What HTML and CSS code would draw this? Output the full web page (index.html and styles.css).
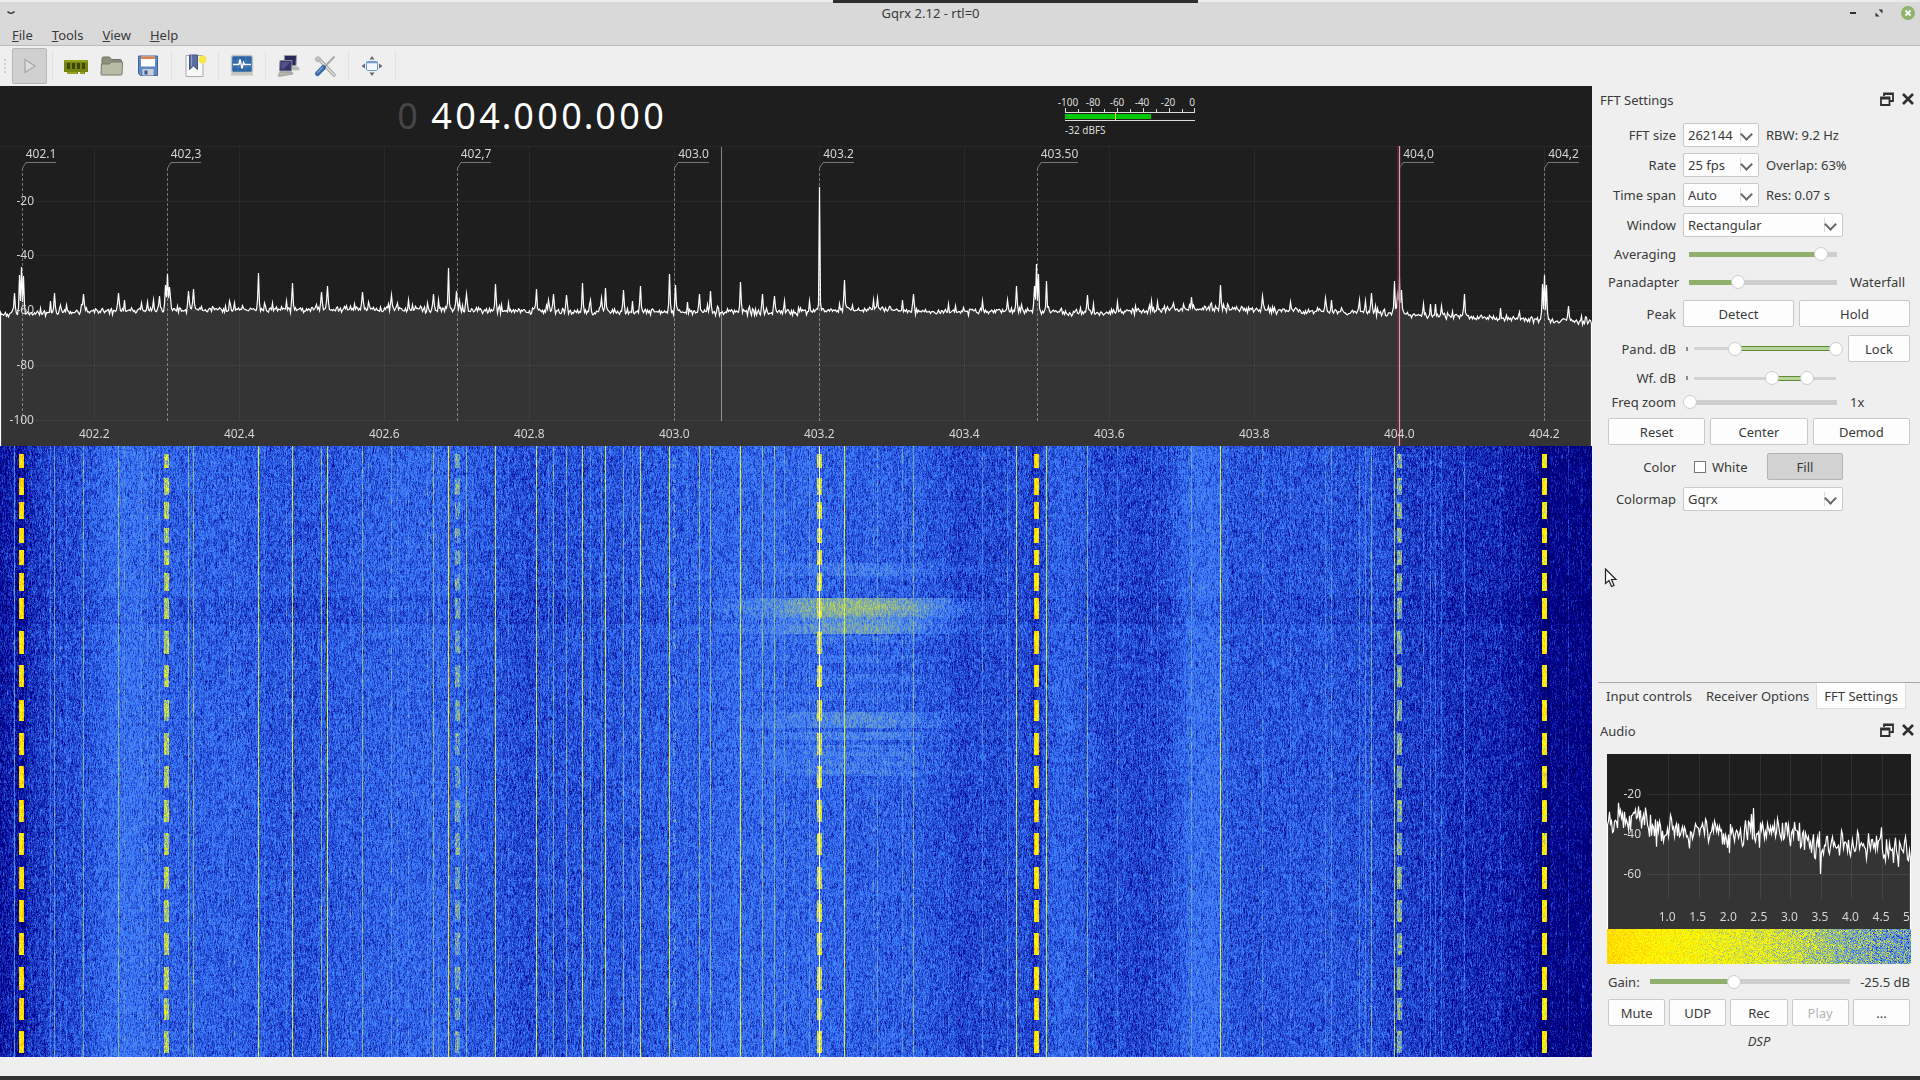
FILE: index.html
```html
<!DOCTYPE html>
<html lang="en">
<head>
  <meta charset="UTF-8">
  <meta name="viewport" content="width=device-width, initial-scale=1.0">
  <title>Gqrx 2.12 - rtl=0</title>
  <link rel="stylesheet" href="styles.css">
</head>
<body>
  <header class="titlebar">
    <div class="top-notch"></div>
    <button class="win-btn menu-btn" aria-label="Window menu">
      <svg width="10" height="6" viewBox="0 0 10 6"><path d="M1.5 1.5Q5 5 8.5 1.5" fill="none" stroke="#333" stroke-width="1.6"/></svg>
    </button>
    <h1>Gqrx 2.12 - rtl=0</h1>
    <div class="win-buttons">
      <button class="win-btn" aria-label="Minimize"><svg width="8" height="8" viewBox="0 0 8 8"><path d="M1 4h6" stroke="#333" stroke-width="2"/></svg></button>
      <button class="win-btn" aria-label="Restore"><svg width="8" height="8" viewBox="0 0 8 8"><path d="M3.5 .5h4v4zM.5 3.5v4h4z" fill="#333"/></svg></button>
      <button class="win-btn" aria-label="Close"><svg width="14" height="14" viewBox="0 0 14 14"><circle cx="7" cy="7" r="7" fill="#8db36c"/><path d="M4.5 4.5l5 5M9.5 4.5l-5 5" stroke="#fff" stroke-width="1.8"/></svg></button>
    </div>
  </header>

  <nav class="menubar">
    <a href="#"><u>F</u>ile</a>
    <a href="#"><u>T</u>ools</a>
    <a href="#"><u>V</u>iew</a>
    <a href="#"><u>H</u>elp</a>
  </nav>

  <div class="toolbar">
    <span class="grip"></span>
    <button class="tool pressed" aria-label="Start DSP">
      <svg width="24" height="24" viewBox="0 0 24 24"><path d="M7 5.5L17 12 7 18.5z" fill="#dedede" stroke="#a5a5a5" stroke-width="1.2"/></svg>
    </button>
    <span class="sep"></span>
    <button class="tool" aria-label="Configure I/O devices">
      <svg width="24" height="24" viewBox="0 0 24 24">
        <path d="M0 6h24v12h-3v2h-5v-2h-2v2H3v-2H0z" fill="#77840f"/>
        <path d="M0 6h24v2H0z" fill="#93a01d"/>
        <path d="M3 9h3v6H3zM8 9h3v6H8zM13 9h3v6h-3zM18 9h3v6h-3z" fill="#3d4708"/>
        <path d="M4 18v2M6 18v2M8 18v2M10 18v2M12 18v2M17 18v2M19 18v2" stroke="#c5bb3a"/>
      </svg>
    </button>
    <button class="tool" aria-label="Load settings">
      <svg width="24" height="24" viewBox="0 0 24 24">
        <path d="M2 4.5q0-1.500 1.500-1.500h6l2 2.500H20q1.500 0 1.500 1.500v12H2z" fill="#8f917d" stroke="#6f7160"/>
        <path d="M1 20l.5-10h8l1.500-2h11.500l-.5 12q0 1-1 1H2q-1 0-1-1z" fill="#babda5" stroke="#77796a"/>
      </svg>
    </button>
    <button class="tool" aria-label="Save settings">
      <svg width="24" height="24" viewBox="0 0 24 24">
        <path d="M2.5 2h19v19.500h-17l-2-2z" fill="#5f8ac5" stroke="#3e639c"/>
        <path d="M5 2.500h14v10H5z" fill="#fff"/>
        <path d="M5 2.500h14v2.500H5z" fill="#e38048"/>
        <path d="M6.500 15h11v6.500h-11z" fill="#c9ced6"/>
        <path d="M8.500 16.500h3v4h-3z" fill="#34568c"/>
      </svg>
    </button>
    <span class="sep"></span>
    <button class="tool" aria-label="Bookmarks">
      <svg width="24" height="24" viewBox="0 0 24 24">
        <path d="M3 1.500h17v21H3z" fill="#f8f8f8" stroke="#a9a9a9"/>
        <path d="M6.500 1h8v14.500l-4-3.500-4 3.500z" fill="#5b6ea1" stroke="#45557f"/>
        <path d="M8.500 1v11" stroke="#8e9dc4"/>
        <circle cx="19.500" cy="5.500" r="4" fill="#f6e74a"/>
      </svg>
    </button>
    <span class="sep"></span>
    <button class="tool" aria-label="I/Q recorder">
      <svg width="24" height="24" viewBox="0 0 24 24">
        <path d="M2 18h20l1.500 3.500H.5z" fill="#c5c9bd"/>
        <rect x="1.500" y="1.500" width="21" height="17" rx="2" fill="#2c64a4" stroke="#bfc5c5" stroke-width="1.500"/>
        <path d="M3 7h18M3 13h18M8 3v14M16 3v14" stroke="#4c83bf" stroke-width=".8"/>
        <path d="M3 10.500h6l1-5 2 9 1.500-6 1 2H21" fill="none" stroke="#fff" stroke-width="1.400"/>
      </svg>
    </button>
    <span class="sep"></span>
    <button class="tool" aria-label="Remote control">
      <svg width="24" height="24" viewBox="0 0 24 24">
        <path d="M7.500 1.500h12l-.5 10h-12z" fill="#29285a" stroke="#9a9ca0"/>
        <path d="M13 12l8 .5 2 3.500-7 .5z" fill="#b9bbb5"/>
        <path d="M3 6.500h12l-.5 10.500H2.500z" fill="#34336b" stroke="#8d8f93"/>
        <path d="M4.500 8h9l-7 7h-2z" fill="#53528c"/>
        <path d="M3 18h12l1 2-14 2.500-1-1z" fill="#b5b8ad" stroke="#85877f" stroke-width=".6"/>
      </svg>
    </button>
    <button class="tool" aria-label="Remote control settings">
      <svg width="24" height="24" viewBox="0 0 24 24">
        <path d="M5 4l16 17" stroke="#9fa29c" stroke-width="3.400" stroke-linecap="round"/>
        <path d="M5 4l16 17" stroke="#dfe1dc" stroke-width="1.600" stroke-linecap="round"/>
        <path d="M2 3q-1 5 4 5.500Q9 7 7.500 3.500L5 5z" fill="#b8bbb5"/>
        <path d="M21.500 2.500L12 12.500" stroke="#a7aaa5" stroke-width="2"/>
        <path d="M10.500 13.500L4.500 19.500" stroke="#3669a8" stroke-width="5" stroke-linecap="round"/>
        <path d="M9.500 13.500l-5 5" stroke="#7fa7d6" stroke-width="1.400" stroke-linecap="round"/>
      </svg>
    </button>
    <span class="sep"></span>
    <button class="tool" aria-label="Full screen">
      <svg width="24" height="24" viewBox="0 0 24 24">
        <rect x="6.500" y="7.500" width="11" height="9" rx="1" fill="#f3f6fa" stroke="#6f9bcd"/>
        <path d="M6.500 8.500h11" stroke="#6f9bcd" stroke-width="1.500"/>
        <path d="M12 2l2.500 3.500h-5zM12 22l2.500-3.500h-5zM1.500 12L5 9.500v5zM22.500 12L19 9.500v5z" fill="#5e6a78"/>
      </svg>
    </button>
    <span class="sep"></span>
  </div>

  <div class="workspace">
    <main class="receiver">
      <div class="readout">
        <div class="frequency">
          <span class="digit off">0</span><span class="dot"></span>
          <span class="digit">4</span><span class="digit">0</span><span class="digit">4</span><span class="dot">.</span>
          <span class="digit">0</span><span class="digit">0</span><span class="digit">0</span><span class="dot">.</span>
          <span class="digit">0</span><span class="digit">0</span><span class="digit">0</span>
        </div>
        <svg class="meter" width="144" height="60" viewBox="0 0 144 60">
          <g text-anchor="middle">
            <text x="7" y="20">-100</text>
            <text x="32" y="20">-80</text>
            <text x="56" y="20">-60</text>
            <text x="81" y="20">-40</text>
            <text x="107" y="20">-20</text>
            <text x="131" y="20">0</text>
          </g>
          <path d="M4.500 26v-4M17.500 26v-3M30.500 26v-4M43.500 26v-3M56.500 26v-4M69.500 26v-3M82.500 26v-4M95.500 26v-3M108.500 26v-4M121.500 26v-3M133.500 26v-4M4 26.500h130M4 34.500h130" stroke="#ddd"/>
          <path d="M4 28h86v5H4z" fill="#00c800"/>
          <path d="M54.500 27v7" stroke="#ee0"/>
          <text x="4" y="48">-32 dBFS</text>
        </svg>
      </div>
      <div class="panadapter" id="panadapter">
        <canvas id="spectrum"></canvas>
      </div>
      <div class="waterfall">
        <canvas id="waterfall"></canvas>
      </div>
    </main>

    <aside class="docks">
      <section class="dock fft-dock">
        <div class="dock-title">
          <h2>FFT Settings</h2>
          <button aria-label="Float"><svg width="14" height="14" viewBox="0 0 14 14"><path d="M4 4V1.500h9V9h-3M4 2h9M1 5.500h8.500V13H1zM1 6.500h8.500" fill="none" stroke="#2f2f2f" stroke-width="1.800"/></svg></button>
          <button aria-label="Close"><svg width="14" height="14" viewBox="0 0 14 14"><path d="M2 2l10 10M12 2L2 12" stroke="#2f2f2f" stroke-width="2.600"/></svg></button>
        </div>
        <form class="fft-form">
          <div class="row">
            <label for="fftSize">FFT size</label>
            <span class="combo small"><select id="fftSize"><option>262144</option></select></span>
            <span>RBW: 9.2 Hz</span>
          </div>
          <div class="row">
            <label for="rate">Rate</label>
            <span class="combo small"><select id="rate"><option>25 fps</option></select></span>
            <span>Overlap: 63%</span>
          </div>
          <div class="row">
            <label for="timeSpan">Time span</label>
            <span class="combo small"><select id="timeSpan"><option>Auto</option></select></span>
            <span>Res: 0.07 s</span>
          </div>
          <div class="row">
            <label for="window">Window</label>
            <span class="combo"><select id="window"><option>Rectangular</option></select></span>
          </div>
          <div class="row slider-row">
            <label for="averaging">Averaging</label>
            <input class="slider" type="range" id="averaging" value="90" style="--fill: 90%">
          </div>
          <div class="row slider-row">
            <label for="split">Panadapter</label>
            <input class="slider" type="range" id="split" value="33" style="--fill: 33%">
            <span>Waterfall</span>
          </div>
          <div class="row button-row">
            <span class="label">Peak</span>
            <button type="button">Detect</button>
            <button type="button">Hold</button>
          </div>
          <div class="row button-row">
            <label for="pandMin">Pand. dB</label>
            <span class="dual" style="--from: 30%; --to: 100%">
              <input type="range" id="pandMin" value="31">
              <input type="range" aria-label="Pand. dB max" value="100">
            </span>
            <button type="button">Lock</button>
          </div>
          <div class="row compact">
            <label for="wfMin">Wf. dB</label>
            <span class="dual" style="--from: 56%; --to: 79%">
              <input type="range" id="wfMin" value="56">
              <input type="range" aria-label="Wf. dB max" value="80">
            </span>
          </div>
          <div class="row compact">
            <label for="zoom">Freq zoom</label>
            <input class="slider" type="range" id="zoom" value="0" style="--fill: 0%">
            <span>1x</span>
          </div>
          <div class="row button-row even">
            <button type="button">Reset</button>
            <button type="button">Center</button>
            <button type="button">Demod</button>
          </div>
          <div class="row button-row">
            <span class="label">Color</span>
            <label class="check"><input type="checkbox">White</label>
            <button type="button" class="down">Fill</button>
          </div>
          <div class="row">
            <label for="colormap">Colormap</label>
            <span class="combo"><select id="colormap"><option>Gqrx</option></select></span>
          </div>
        </form>
      </section>

      <nav class="tabs">
        <button>Input controls</button>
        <button>Receiver Options</button>
        <button class="active">FFT Settings</button>
      </nav>

      <section class="dock audio-dock">
        <div class="dock-title">
          <h2>Audio</h2>
          <button aria-label="Float"><svg width="14" height="14" viewBox="0 0 14 14"><path d="M4 4V1.500h9V9h-3M4 2h9M1 5.500h8.500V13H1zM1 6.500h8.500" fill="none" stroke="#2f2f2f" stroke-width="1.800"/></svg></button>
          <button aria-label="Close"><svg width="14" height="14" viewBox="0 0 14 14"><path d="M2 2l10 10M12 2L2 12" stroke="#2f2f2f" stroke-width="2.600"/></svg></button>
        </div>
        <div class="audio-plot" id="audioPlot"><canvas id="audioSpectrum"></canvas></div>
        <div class="audio-fall"><canvas id="audioFall"></canvas></div>
        <div class="gain">
          <label for="gain">Gain:</label>
          <input class="slider" type="range" id="gain" value="42" style="--fill: 42%">
          <output for="gain">-25.5 dB</output>
        </div>
        <div class="audio-buttons">
          <button>Mute</button>
          <button>UDP</button>
          <button>Rec</button>
          <button disabled>Play</button>
          <button>...</button>
        </div>
        <p class="dsp">DSP</p>
      </section>
      <svg class="pointer" width="14" height="20" viewBox="0 0 14 20"><path d="M1.500 1v14.500l3.500-3 2.500 6 2.500-1-2.500-6h4.500z" fill="#fff" stroke="#222" stroke-width="1.200"/></svg>
    </aside>
  </div>

  <footer class="statusbar"></footer>
  <script src="script.js"></script>
</body>
</html>
```
FILE: styles.css
```css
* {
  box-sizing: border-box;
}

body {
  display: flex;
  flex-direction: column;
  min-height: 100vh;
  margin: 0;
  background-color: #efefef;
  color: #3a3a3a;
  font-family: "Noto Sans", "Open Sans", sans-serif;
  font-size: 13px;
  line-height: 18px;
}

h1, h2, p {
  margin: 0;
  font-size: 13px;
  font-weight: normal;
}

button, select, input {
  margin: 0;
  color: inherit;
  font: inherit;
}

canvas {
  position: absolute;
  inset: 0;
  width: 100%;
  height: 100%;
}

/* title bar */
.titlebar {
  display: flex;
  align-items: center;
  height: 26px;
  padding: 0 6px 2px;
  background-color: #d9d9d9;
  border-top: 2px solid #ececec;
  position: relative;
}

.titlebar h1 {
  flex: 1;
  text-align: center;
}

.top-notch {
  position: absolute;
  top: -2px;
  left: 43.4%;
  width: 19%;
  height: 3px;
  background-color: #2e2e2e;
}

.win-btn {
  display: flex;
  padding: 0;
  border: none;
  background: none;
}

.menu-btn {
  width: 22px;
}

.win-buttons {
  display: flex;
  align-items: center;
  justify-content: space-between;
  width: 66px;
  margin-left: 16px;
  margin-right: -1px;
}

.menubar {
  display: flex;
  gap: 19px;
  height: 20px;
  padding-left: 12px;
  background-color: #d9d9d9;
  border-bottom: 1px solid #bcbcbc;
}

.menubar a {
  color: inherit;
  text-decoration: none;
}

/* toolbar */
.toolbar {
  display: flex;
  align-items: center;
  height: 40px;
  padding-left: 4px;
}

.grip {
  width: 8px;
  height: 14px;
  border-left: 2px dotted #cfcfcf;
}

.tool {
  display: flex;
  align-items: center;
  justify-content: center;
  width: 36px;
  height: 36px;
  padding: 0;
  border: none;
  background: none;
}

.tool.pressed {
  width: 35px;
  background-color: #d0d0d0;
  border: 1px solid #b6b6b6;
  border-radius: 2px;
}

.sep {
  width: 11px;
  height: 30px;
  background: linear-gradient(#e2e2e2, #e2e2e2) center / 1px 100% no-repeat;
}

/* receiver */
.workspace {
  display: flex;
  flex: 1;
}

.receiver {
  display: flex;
  flex: 1;
  flex-direction: column;
  min-width: 0;
  background-color: #1e1e1e;
}

.readout {
  display: grid;
  grid-template-columns: 2fr 1fr;
  height: 60px;
}

.frequency {
  display: flex;
  align-items: center;
  justify-content: center;
  color: #fff;
  font-size: 36px;
  line-height: 60px;
}

.digit, .dot {
  width: 24px;
  text-align: center;
}

.dot {
  width: 10px;
}

.digit.off {
  color: #464646;
}

.meter {
  overflow: visible;
  fill: #ddd;
  font-size: 10px;
}

.panadapter {
  position: relative;
  height: 300px;
  overflow: hidden;
  color: #d4d4d4;
  font-size: 12px;
  line-height: 16px;
}

.waterfall {
  position: relative;
  flex: 1;
  min-height: 200px;
  background-color: #00008c;
}

.bookmark, .freq-label, .db-label {
  position: absolute;
}

.bookmark {
  top: 0;
  margin-left: 4px;
  border-bottom: 1px solid #777;
}

.freq-label {
  bottom: 4px;
  transform: translateX(-50%);
}

.db-label {
  left: 0;
  width: 34px;
  text-align: right;
  transform: translateY(-50%);
}

/* docks */
.docks {
  position: relative;
  display: flex;
  flex-direction: column;
  width: 328px;
  padding-left: 6px;
}

.fft-dock {
  flex: 1;
}

.dock-title {
  display: flex;
  align-items: center;
  gap: 7px;
  height: 28px;
  padding: 0 5px 0 2px;
}

.dock-title h2 {
  flex: 1;
}

.dock-title button {
  display: flex;
  padding: 0 0 2px;
  border: none;
  background: none;
}

.fft-form {
  display: flex;
  flex-direction: column;
  gap: 6px;
  padding: 9px 10px 0;
}

.row {
  display: flex;
  align-items: center;
  gap: 7px;
  height: 24px;
}

.slider-row {
  height: 22px;
}

.button-row {
  gap: 5px;
  height: 29px;
}

.compact {
  height: 18px;
}

.row > label:first-child, .label {
  width: 68px;
  text-align: right;
  white-space: nowrap;
}

.button-row > label:first-child, .button-row > .label {
  margin-right: 2px;
}

.row button, .audio-buttons button {
  flex: 1;
  height: 27px;
  padding: 0;
  background-color: #fdfdfd;
  border: 1px solid #c9c9c9;
  border-radius: 2px;
}

.row button.down {
  flex: none;
  width: 76px;
  background-color: #d2d2d2;
  border-color: #b4b4b4;
}

.row button:disabled, .audio-buttons button:disabled {
  color: #b5b5b5;
}

.combo {
  position: relative;
  width: 160px;
  height: 24px;
}

.combo.small {
  width: 76px;
}

.combo select {
  width: 100%;
  height: 24px;
  padding: 0 4px;
  appearance: none;
  background-color: #fdfdfd;
  border: 1px solid #c9c9c9;
  border-radius: 2px;
}

.combo::after {
  content: "";
  position: absolute;
  top: 7px;
  right: 8px;
  width: 7px;
  height: 7px;
  border: solid #666;
  border-width: 0 2px 2px 0;
  transform: rotate(45deg);
  pointer-events: none;
}

.combo::before {
  content: "";
  position: absolute;
  top: 5px;
  right: 18px;
  height: 14px;
  border-left: 1px solid #ddd;
}

.check {
  display: flex;
  align-items: center;
  width: 79px;
  padding-left: 11px;
  gap: 6px;
}

.check input {
  width: 12px;
  height: 12px;
  appearance: none;
  background-color: #fff;
  border: 1px solid #777;
}

/* sliders */
.slider {
  width: 160px;
  height: 16px;
  appearance: none;
  background: linear-gradient(to right, #8fb06c var(--fill), #cecece var(--fill)) center / 148px 5px no-repeat;
}

.slider::-webkit-slider-thumb, .dual input::-webkit-slider-thumb {
  width: 14px;
  height: 14px;
  appearance: none;
  background-color: #fff;
  border: 1px solid #ccc;
  border-radius: 50%;
  pointer-events: auto;
}

.dual {
  position: relative;
  width: 160px;
  height: 16px;
  background:
    linear-gradient(#8a8a8a, #8a8a8a) 3px center / 2px 4px no-repeat,
    linear-gradient(to right, #d2d2d2 var(--from), transparent var(--from), transparent var(--to), #d2d2d2 var(--to)) 11px center / 142px 3px no-repeat,
    linear-gradient(to right, transparent var(--from), #b9d49b var(--from), #b9d49b var(--to), transparent var(--to)) 11px center / 142px 3px no-repeat,
    linear-gradient(to right, transparent var(--from), #5d8c38 var(--from), #5d8c38 var(--to), transparent var(--to)) 11px center / 142px 5px no-repeat;
}

.dual input {
  position: absolute;
  inset: 0;
  width: 100%;
  height: 16px;
  appearance: none;
  background: none;
  pointer-events: none;
}

.tabs {
  display: flex;
  height: 32px;
  padding-left: 1px;
  border-top: 1px solid #a9a9a9;
}

.tabs button {
  height: 26px;
  padding: 0 7px;
  border: none;
  background: none;
}

.tabs .active {
  background-color: #fdfdfd;
  border: 1px solid #ddd;
  border-top-color: #fdfdfd;
}

/* audio */
.audio-dock {
  display: flex;
  flex-direction: column;
  height: 343px;
}

.audio-dock .dock-title {
  height: 36px;
  padding-bottom: 2px;
  margin-bottom: 4px;
}

.audio-plot, .audio-fall {
  position: relative;
  height: 175px;
  margin: 0 9px;
  overflow: hidden;
  color: #d4d4d4;
  font-size: 12px;
  line-height: 16px;
}

.audio-fall {
  height: 35px;
}

.gain {
  display: flex;
  align-items: center;
  justify-content: space-between;
  height: 35px;
  padding: 0 10px;
}

.gain .slider {
  width: 212px;
  background-size: 200px 5px;
}

.gain output {
  white-space: nowrap;
}

.audio-buttons {
  display: grid;
  grid-template-columns: repeat(5, 1fr);
  gap: 4px;
  padding: 0 10px;
}

.dsp {
  padding-top: 6px;
  text-align: center;
  font-style: italic;
}

.pointer {
  position: absolute;
  top: 482px;
  left: 12px;
}

.statusbar {
  height: 23px;
  border-bottom: 4px solid #333;
}
```
FILE: script.js
```javascript
const BASE_W = 1592;
const START = 402.07;
const SPAN = 2.1959;

// [x, y] of each carrier in the panadapter, in a 1592 x 300 plot
const PEAKS = [
  [14,147],[19,129],[21,121],[23,130],[50,155],[54,147],[60,159],[66,159],[83,148],[118,147],[124,154],
  [141,157],[147,156],[153,154],[159,150],[165,139],[167,128],[169,141],[188,145],[193,143],[229,155],
  [234,157],[258,127],[264,157],[286,155],[292,137],[321,146],[327,140],[350,160],[362,146],[368,156],
  [391,149],[397,157],[408,154],[427,157],[433,148],[438,154],[448,122],[456,145],[459,155],[466,148],
  [495,138],[501,159],[508,157],[536,143],[548,154],[553,148],[566,149],[582,137],[590,154],[601,152],
  [605,142],[623,144],[632,155],[640,140],[669,128],[675,139],[687,156],[699,148],[710,145],[740,136],
  [762,148],[774,150],[784,155],[809,155],[819,41],[844,134],[873,154],[877,152],
  [902,154],[913,148],[948,158],[982,155],[1007,154],[1016,140],[1034,140],[1036,118],[1038,128],
  [1046,135],[1087,149],[1093,158],[1117,156],[1151,155],[1157,156],[1173,157],[1191,151],[1220,139],
  [1227,158],[1262,150],[1290,156],[1325,152],[1331,154],[1359,154],[1365,155],[1371,147],[1394,135],
  [1397,148],[1399,132],[1401,144],[1423,158],[1430,158],[1435,158],[1441,160],[1464,148],[1500,162],
  [1519,166],[1542,138],[1544,129],[1546,139],[1568,160],[1581,170]
];

const FLOOR = [[0,169],[60,166],[118,164],[400,163],[600,166],[800,166],[870,163],[940,166],[1030,165],
  [1100,167],[1190,162],[1300,165],[1380,167],[1440,170],[1500,172],[1592,176]];

// colour level of the waterfall noise floor
const LEVEL = [[0,75],[15,79],[50,86],[90,91],[115,97],[135,98],[155,93],[220,93],[300,90],[400,94],
  [460,93],[520,88],[640,91],[740,95],[860,93],[920,92],[960,87],[1030,89],[1065,94],[1100,88],[1150,86],
  [1175,90],[1190,97],[1215,97],[1230,90],[1300,90],[1370,90],[1400,85],[1460,82],[1520,76],[1550,70],[1592,67]];

// keyed carriers: x, half width, level
const KEYED = [[21,2,158],[166,2,130],[457,2,112],[674,1,99],[819,2,136],[1036,2,156],[1399,2,118],[1544,2,150]];
const KEYS = [[8,14],[32,17],[56,17],[82,15],[104,15],[127,18],[152,21],[185,23],[219,22],[254,21],[287,22],
  [320,22],[354,22],[387,22],[421,22],[454,22],[487,22],[521,23],[552,22],[585,22]];

const BOOKMARKS = [[402.1,'402.1'],[402.3,'402,3'],[402.7,'402,7'],[403.0,'403.0'],[403.2,'403.2'],
  [403.5,'403.50'],[404.0,'404,0'],[404.2,'404,2']];

let seed = 7;
function rnd() {
  seed = (seed * 1664525 + 1013904223) >>> 0;
  return seed / 4294967296;
}
function gauss() {
  return (rnd() + rnd() + rnd() + rnd() - 2) * 1.7;
}

function interp(points, x) {
  for (let i = 1; i < points.length; i++) {
    if (x <= points[i][0]) {
      const [x0, y0] = points[i - 1];
      const [x1, y1] = points[i];
      return y0 + (y1 - y0) * (x - x0) / (x1 - x0);
    }
  }
  return points[points.length - 1][1];
}

function freqRatio(f) {
  return (f - START) / SPAN;
}

function color(v) {
  v = Math.max(0, Math.min(255, v));
  if (v < 20) return [0, 0, 0];
  if (v < 70) return [0, 0, 140 * (v - 20) / 50];
  if (v < 100) return [60 * (v - 70) / 30, 125 * (v - 70) / 30, 140 + 115 * (v - 70) / 30];
  if (v < 150) return [60 + 195 * (v - 100) / 50, 125 + 130 * (v - 100) / 50, 255 - 255 * (v - 100) / 50];
  if (v < 250) return [255, 255 - 255 * (v - 150) / 100, 0];
  return [255, 255, 255];
}

function setup(id) {
  const canvas = document.getElementById(id);
  canvas.width = canvas.clientWidth;
  canvas.height = canvas.clientHeight;
  return [canvas.getContext('2d'), canvas.width, canvas.height];
}

function line(ctx, x0, y0, x1, y1) {
  ctx.beginPath();
  ctx.moveTo(x0, y0);
  ctx.lineTo(x1, y1);
  ctx.stroke();
}

function trace(ctx, ys, w, h) {
  ctx.beginPath();
  ctx.moveTo(0.5, h);
  ys.forEach((y, x) => ctx.lineTo(x + 0.5, y));
  ctx.lineTo(w - 0.5, h);
  ctx.fillStyle = 'rgba(255, 255, 255, 0.1)';
  ctx.fill();
  ctx.strokeStyle = '#fff';
  ctx.lineWidth = 1.2;
  ctx.stroke();
}

function drawSpectrum() {
  const [ctx, w, h] = setup('spectrum');
  const scale = w / BASE_W;
  ctx.fillStyle = '#1e1e1e';
  ctx.fillRect(0, 0, w, h);

  ctx.strokeStyle = '#333';
  ctx.setLineDash([1, 1]);
  for (let i = 0; i < 6; i++) line(ctx, i ? 36 : 0, Math.round(i * 54.7) + 0.5, w, Math.round(i * 54.7) + 0.5);
  for (let f = 402.2; f < 404.3; f += 0.2) {
    const x = Math.round(freqRatio(f) * w) + 0.5;
    line(ctx, x, 0, x, 275);
  }

  BOOKMARKS.forEach(([f]) => {
    const x = Math.round(freqRatio(f) * w) + 0.5;
    ctx.strokeStyle = '#777';
    ctx.setLineDash([3, 2]);
    line(ctx, x, 22, x, 275);
    ctx.setLineDash([]);
    line(ctx, x, 22, x + 4, 16);
  });

  ctx.setLineDash([]);
  ctx.strokeStyle = '#888';
  const mid = Math.round(w * 0.4531) + 0.5;
  line(ctx, mid, 1, mid, 275);

  seed = 11;
  const ys = [];
  for (let x = 0; x < w; x++) ys.push(interp(FLOOR, x / scale) + gauss() * 1.5 - (rnd() < 0.06 ? rnd() * 6 : 0));
  PEAKS.forEach(([x, y]) => {
    const px = Math.round(x * scale);
    ys[px] = y;
    [px - 1, px + 1].forEach((n) => {
      if (ys[n] > y + 12) ys[n] -= Math.min(6, (ys[n] - y) / 3);
    });
  });
  trace(ctx, ys, w, h);

  const vfo = Math.round(freqRatio(404) * w);
  ctx.fillStyle = 'rgba(120, 50, 70, 0.55)';
  ctx.fillRect(vfo - 2, 0, 4, h);
  ctx.fillStyle = '#d9a3ab';
  ctx.fillRect(vfo, 0, 1, h);
}

function bell(d, width) {
  return Math.exp(-d * d / (2 * width * width));
}

// strength of the wide drifting signal around 403.25 for one row
function burst(y) {
  if (y > 116 && y < 130) return 7;
  if (y >= 152 && y < 171) return 34 - Math.abs(y - 161) * 0.9;
  if (y >= 171 && y < 188) return 20;
  if (y >= 188 && y < 266 && y % 19 < 8) return 4;
  if (y >= 266 && y < 282) return 12;
  if (y >= 286 && y < 294) return 10;
  if (y >= 299 && y < 330) return y % 9 < 4 ? 9 : 5;
  return 0;
}

function drawWaterfall() {
  const [ctx, w, h] = setup('waterfall');
  const scale = w / BASE_W;
  const img = ctx.createImageData(w, h);
  seed = 99;

  const base = new Float32Array(w);
  const carrier = new Float32Array(w);
  for (let x = 0; x < w; x++) base[x] = interp(LEVEL, x / scale) + gauss() * 0.8;
  PEAKS.forEach(([x, y]) => {
    if (KEYED.some((k) => Math.abs(k[0] - x) < 4)) return;
    const px = Math.round(x * scale);
    const up = interp(FLOOR, x) - y;
    carrier[px] = up > 22 ? 48 : up > 15 ? 25 : up > 10 ? 12 : 6;
    if (x > 1410) carrier[px] = Math.min(carrier[px], 15);
  });
  carrier[Math.round(448 * scale)] = 68;
  const smear = new Float32Array(w);
  const white = Math.round(819 * scale);

  for (let y = 0; y < h; y++) {
    const amp = burst(y);
    const wide = y > 150 && y < 172 ? 62 : 52;
    const rowShift = gauss() * 0.5 - (y > 150 && y < 178 ? 2.5 : 0);
    const key = KEYS.find((k) => y >= k[0] && y < k[0] + k[1]);

    for (let x = 0; x < w; x++) {
      const rx = x / scale;
      smear[x] = smear[x] * 0.45 + gauss() * 6.2;
      let v = base[x] + rowShift + smear[x];
      if (v > 100) v = 100 + (v - 100) * 0.5;
      if (amp) v += amp * (bell(rx - 858, wide) * 0.85 + bell(rx - 858, 110) * 0.15);
      if (carrier[x]) v = Math.max(v, base[x] + carrier[x] + smear[x]);
      for (const [kx, half, level] of KEYED) {
        const d = Math.abs(rx - kx);
        if (d > half + 3) continue;
        if (d <= half + 0.5 && key) {
          v = level + smear[x] * 1.5 + (level > 145 && d > 1.5 ? 12 : 0);
        } else if (level > 145) {
          v -= 6;
        }
      }
      if (x === white) v = 255;
      const c = color(v);
      const i = (y * w + x) * 4;
      img.data[i] = c[0];
      img.data[i + 1] = c[1];
      img.data[i + 2] = c[2];
      img.data[i + 3] = 255;
    }
  }
  ctx.putImageData(img, 0, 0);
}

function drawAudio() {
  const [ctx, w, h] = setup('audioSpectrum');
  ctx.fillStyle = '#1e1e1e';
  ctx.fillRect(0, 0, w, h);
  ctx.strokeStyle = '#303030';
  for (let i = 1; i < 4; i++) line(ctx, 40, i * 40 + 0.5, w, i * 40 + 0.5);
  for (let i = 2; i < 11; i++) {
    const x = Math.round(w * i * 0.1005) + 0.5;
    line(ctx, x, 0, x, 145);
  }
  seed = 5;
  const shape = [[0,70],[25,67],[35,66],[48,78],[90,75],[130,79],[165,78],[190,82],[220,89],[270,92],[304,98]];
  const ys = [];
  let n = 0;
  for (let x = 0; x < w; x++) {
    n = n * 0.15 + gauss() * 8;
    ys.push(interp(shape, x * 304 / w) + n);
  }
  ys[Math.round(w * 0.48)] = 54;
  ys[Math.round(w * 0.702)] = 120;
  trace(ctx, ys, w, h);

  const [fall, fw, fh] = setup('audioFall');
  const img = fall.createImageData(fw, fh);
  const hue = [[0,164],[0.15,156],[0.4,145],[0.6,136],[0.8,119],[1,110]];
  for (let y = 0; y < fh; y++) {
    for (let x = 0; x < fw; x++) {
      const t = x / fw;
      const c = color(interp(hue, t) + gauss() * (6 + 10 * t));
      img.data.set([c[0], c[1], c[2], 255], (y * fw + x) * 4);
    }
  }
  fall.putImageData(img, 0, 0);
}

function addLabel(parent, cls, text, prop, value) {
  const el = document.createElement('span');
  el.className = cls;
  el.textContent = text;
  el.style[prop] = value;
  parent.appendChild(el);
}

function addLabels() {
  const pan = document.getElementById('panadapter');
  BOOKMARKS.forEach(([f, name]) => addLabel(pan, 'bookmark', name, 'left', freqRatio(f) * 100 + '%'));
  for (let i = 0; i < 11; i++) {
    const f = 402.2 + i * 0.2;
    addLabel(pan, 'freq-label', f.toFixed(1), 'left', freqRatio(f) * 100 + '%');
  }
  for (let i = 1; i < 6; i++) addLabel(pan, 'db-label', String(-20 * i), 'top', Math.round(i * 54.7) + 'px');

  const audio = document.getElementById('audioPlot');
  for (let i = 2; i < 11; i++) addLabel(audio, 'freq-label', (i / 2).toFixed(1), 'left', i * 10.05 - 0.3 + '%');
  for (let i = 1; i < 4; i++) addLabel(audio, 'db-label', String(-20 * i), 'top', i * 40 + 'px');
}

function draw() {
  drawSpectrum();
  drawWaterfall();
  drawAudio();
}

addLabels();
draw();
window.addEventListener('resize', draw);
```
